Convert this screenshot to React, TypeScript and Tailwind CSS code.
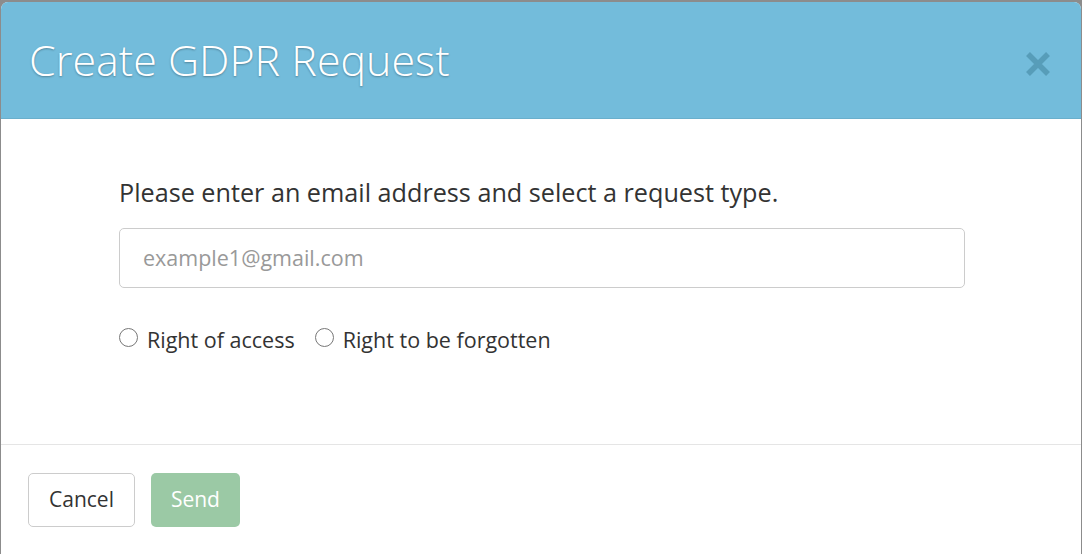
import React from "react";

const font = { fontFamily: '"Open Sans", "Noto Sans", sans-serif' };

function Radio({ label }: { label: string }) {
  return (
    <label className="flex items-center gap-[9px] text-[21.5px] text-[#333]">
      <span className="w-[19px] h-[19px] rounded-full border-[1.5px] border-[#777] bg-white shrink-0 -mt-[6px]" />
      <span>{label}</span>
    </label>
  );
}

export default function App() {
  return (
    <div className="w-[1082px] h-[554px] bg-[#8c8c8c] pt-[2px] pl-[1px] overflow-hidden" style={font}>
      <div className="w-[1080px] h-[560px] bg-white rounded-[7px] overflow-hidden flex flex-col">
        <div className="h-[117px] bg-[#73bcdb] flex items-center justify-between pl-[28px] pr-[31px] border-b border-[#6aafcc]">
          <h1 className="text-[43px] font-light text-white leading-none -mt-[2px] [text-shadow:0_1px_2px_rgba(0,0,0,0.3)]">
            Create GDPR Request
          </h1>
          <svg width="26" height="26" viewBox="0 0 26 26" className="mt-[8px] -mr-[1px]">
            <path d="M3 3 L23 23 M23 3 L3 23" stroke="#579db9" strokeWidth="5.5" strokeLinecap="butt" />
          </svg>
        </div>
        <div className="h-[326px] px-[118px] pt-[56px] border-b border-[#e5e5e5]">
          <p className="text-[25.2px] text-[#333] leading-[34px]">
            Please enter an email address and select a request type.
          </p>
          <div className="mt-[19px] w-[846px] h-[60px] border border-[#ccc] rounded-[5px] flex items-center px-[23px] text-[21.5px] text-[#999]">
            example1@gmail.com
          </div>
          <div className="mt-[36px] flex items-center gap-[20px]">
            <Radio label="Right of access" />
            <Radio label="Right to be forgotten" />
          </div>
        </div>
        <div className="flex items-start gap-[16px] pl-[27px] pt-[28px]">
          <button className="h-[54px] px-[20px] border border-[#ccc] rounded-[5px] bg-white text-[21px] text-[#333]">
            Cancel
          </button>
          <button className="h-[54px] px-[20px] rounded-[5px] bg-[#9bc9a5] text-[21px] text-white">
            Send
          </button>
        </div>
      </div>
    </div>
  );
}
